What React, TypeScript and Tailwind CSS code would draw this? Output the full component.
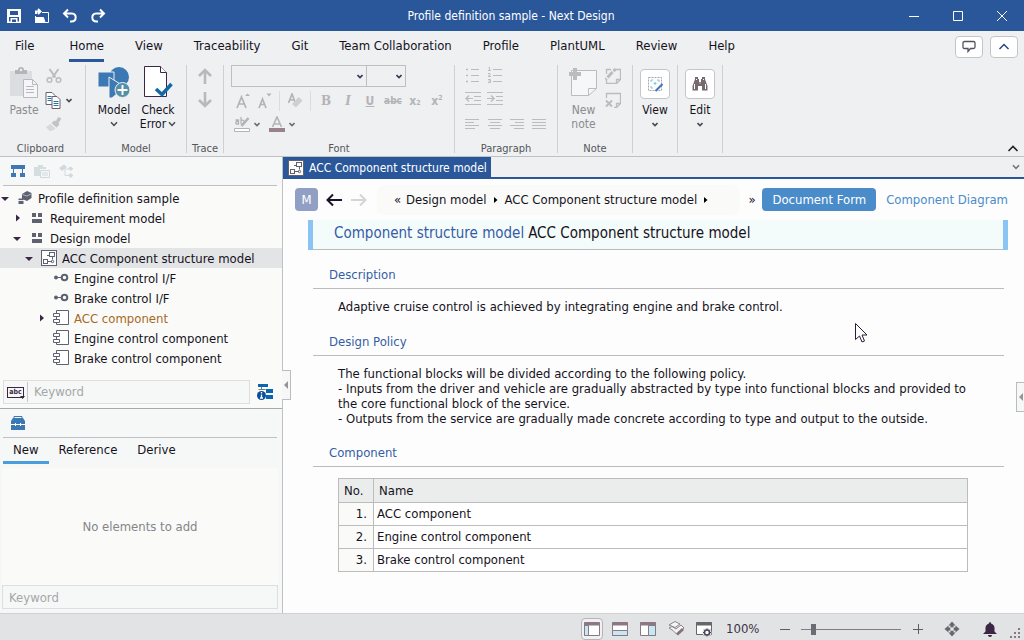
import React, { useState } from "react";
import clsx from "clsx";

// --- SHARED ---

type IconProps = { className?: string };

function ChevronDown({ className }: IconProps) {
  return (
    <svg viewBox="0 0 8 6" fill="none" stroke="currentColor" strokeWidth="1.5" className={clsx("h-[6px] w-[8px] shrink-0", className)}>
      <path d="M1 1.2 4 4.4 7 1.2" />
    </svg>
  );
}

function SmallChevron({ className }: IconProps) {
  return (
    <svg viewBox="0 0 6 5" fill="none" stroke="currentColor" strokeWidth="1.6" className={clsx("h-[5px] w-[6px] shrink-0", className)}>
      <path d="M.5 1 3 3.500 5.500 1" />
    </svg>
  );
}

// Nodes joined by a connector, in a frame
function StructureIcon({ className }: IconProps) {
  return (
    <svg viewBox="0 0 16 16" fill="none" stroke="#5d6170" className={clsx("h-4 w-4 shrink-0", className)}>
      <rect x="0.5" y="0.5" width="15" height="15" fill="#fdfdfd" />
      <rect x="8.5" y="2.5" width="5" height="4" />
      <rect x="2.5" y="9.5" width="4" height="4" />
      <path d="M6.5 11.5H11M11.5 6.5v3M6 5.5h2.5" />
      <circle cx="11.5" cy="11.5" r="1.2" />
    </svg>
  );
}

function ProjectIcon() {
  return (
    <svg viewBox="0 0 16 16" className="h-4 w-4 shrink-0" fill="#5d6170">
      <path d="M5 4 10 1l4.500 2v5L10 11 5 9z" />
      <path d="M5.500 4.500 9.800 6 14 4" stroke="#b9bbc4" strokeWidth="0.9" fill="none" />
      <path d="M1.500 8.500h5V14h-5z" />
      <path d="M1 10.500h6" stroke="#fafbf9" strokeWidth="0.9" />
    </svg>
  );
}

function ModelIcon() {
  return (
    <svg viewBox="0 0 16 16" className="h-4 w-4 shrink-0" fill="#5d6170">
      <path d="M3 3h4v4H3zM9 3h4v4H9zM3 9h10v4H3z" />
    </svg>
  );
}

function InterfaceIcon() {
  return (
    <svg viewBox="0 0 16 16" className="h-4 w-4 shrink-0" fill="#5d6170">
      <circle cx="3" cy="7.500" r="2" />
      <path d="M4 7h5v1H4z" />
      <circle cx="11.500" cy="7.500" r="2.800" fill="none" stroke="#5d6170" strokeWidth="2" />
    </svg>
  );
}

function ComponentIcon() {
  return (
    <svg viewBox="0 0 16 16" className="h-4 w-4 shrink-0" fill="#fff" stroke="#5d6170">
      <path d="M3.500.5h12v14h-12z" />
      <path d="M.5 3.500h6v3h-6zM.5 9.500h6v3h-6z" />
    </svg>
  );
}

// --- TITLE BAR ---

function TitleBar() {
  return (
    <header className="flex h-[31px] shrink-0 items-center bg-[#2a579a] text-white">
      <div className="flex items-center gap-3 pl-1.5">
        <button aria-label="Save" className="flex h-6 w-4 items-center justify-center">
          <svg viewBox="0 0 16 16" className="h-4 w-4" fill="#fff">
            <path d="M1 1h14v14H1zM4 3v4h8V3zM3 9v4.500h1.500V10h7v3.500H13V9zM6 11.500V14h4v-2.500z" fillRule="evenodd" />
          </svg>
        </button>
        <button aria-label="Open" className="flex h-6 w-4 items-center justify-center">
          <svg viewBox="0 0 16 16" className="h-4 w-4" fill="none" stroke="#fff">
            <path d="M8 4.500h6.500v10h-13V8" />
            <path d="M1.500 9.500h8l1.500 5h-9.500z" fill="#fff" />
            <path d="M2 6V3.500h4M4 1l2.500 2.500L4 6" strokeWidth="2" />
          </svg>
        </button>
        <button aria-label="Undo" className="flex h-6 w-4 items-center justify-center">
          <svg viewBox="0 0 16 16" className="h-4 w-4" fill="none" stroke="#fff" strokeWidth="2">
            <path d="M6 1.500 2 5.500l4 4M2.500 5.500H10c5 0 5 8-.5 8H8" />
          </svg>
        </button>
        <button aria-label="Redo" className="flex h-6 w-4 items-center justify-center">
          <svg viewBox="0 0 16 16" className="h-4 w-4" fill="none" stroke="#fff" strokeWidth="2">
            <path d="m10 1.500 4 4-4 4M13.500 5.500H6c-5 0-5 8 .5 8H8" />
          </svg>
        </button>
      </div>
      <h1 className="flex-1 pl-6 text-center text-xs font-normal">Profile definition sample - Next Design</h1>
      <div className="flex items-center">
        <button aria-label="Minimize" className="flex h-7 w-11 items-center justify-center">
          <svg viewBox="0 0 10 10" className="h-[10px] w-[10px]" stroke="#fff"><path d="M0 5.500h10" /></svg>
        </button>
        <button aria-label="Maximize" className="flex h-7 w-11 items-center justify-center">
          <svg viewBox="0 0 10 10" className="h-[10px] w-[10px]" stroke="#fff" fill="none"><path d="M.5.5h9v9h-9z" /></svg>
        </button>
        <button aria-label="Close" className="flex h-7 w-11 items-center justify-center">
          <svg viewBox="0 0 12 12" className="h-3 w-3" stroke="#fff"><path d="m1 1 10 10M11 1 1 11" /></svg>
        </button>
      </div>
    </header>
  );
}

const MENUS = ["File", "Home", "View", "Traceability", "Git", "Team Collaboration", "Profile", "PlantUML", "Review", "Help"];

function MenuBar() {
  const [active, setActive] = useState("Home");
  return (
    <nav className="flex h-[31px] shrink-0 items-center pr-1.5 pl-[15px] text-[13px]">
      <div className="flex gap-[31px]">
        {MENUS.map((menu) => (
          <button
            key={menu}
            onClick={() => setActive(menu)}
            className={clsx("h-[31px] border-b-3 pt-px first:mr-1", menu === active ? "border-[#2a579a]" : "border-transparent")}
          >
            {menu}
          </button>
        ))}
      </div>
      <div className="ml-auto flex gap-[7px]">
        <button aria-label="Feedback" className="flex h-[22px] w-7 items-center justify-center rounded-sm border border-[#c5c5c8] bg-white">
          <svg viewBox="0 0 14 14" className="h-[14px] w-[14px]" fill="none" stroke="#55525f" strokeWidth="1.300">
            <path d="M2.500 1.500h9q1.500 0 1.500 1.500v4q0 1.500-1.500 1.500H8.500L6 11.500v-3H2.500Q1 8.500 1 7V3q0-1.500 1.500-1.500z" />
          </svg>
        </button>
        <button aria-label="Collapse" className="flex h-[22px] w-7 items-center justify-center rounded-sm border border-[#c5c5c8] bg-white">
          <svg viewBox="0 0 12 8" className="h-2 w-3" fill="none" stroke="#2a4a80" strokeWidth="1.500"><path d="m1.500 6 4.500-4.500L10.500 6" /></svg>
        </button>
      </div>
    </nav>
  );
}

// --- RIBBON ---

function Group({ label, className, children }: { label?: string; className: string; children: React.ReactNode }) {
  return (
    <section className={clsx("flex h-[88px] shrink-0 flex-col justify-between border-r border-[#d0d0d3]", className)}>
      <div>{children}</div>
      <div className="text-center text-[11px] leading-[8px] text-[#55555a]">{label}</div>
    </section>
  );
}

function Tool({ label, className, children }: { label: string; className?: string; children: React.ReactNode }) {
  return (
    <button aria-label={label} className={clsx("flex h-[18px] items-center justify-center", className)}>
      {children}
    </button>
  );
}

function AlignIcon({ d }: { d: string }) {
  return (
    <svg viewBox="0 0 16 12" className="h-3 w-4" stroke="#bcbcbf" fill="none">
      <path d={d} />
    </svg>
  );
}

function ClipboardGroup() {
  return (
    <Group label="Clipboard" className="w-[86px] pr-1">
      <div className="flex gap-1 pl-2">
        <button className="flex w-8 flex-col items-center pt-[2px] text-[#8c8c90]">
          <svg viewBox="0 0 28 32" className="h-8 w-7" fill="none">
            <path d="M0 4h22v25H0z" fill="#dcdde0" />
            <path d="M5 3h3q0-3 3-3t3 3h3v4H5z" fill="#b5b5b9" />
            <circle cx="11" cy="3" r="1.200" fill="#eef0f2" />
            <path d="M13.500 12.500h9l5 5v13h-14z" fill="#f6f6f8" stroke="#b9b9bd" />
            <path d="M22.500 12.500v5h5M16 19.500h8M16 22.500h8M16 25.500h8" stroke="#b9b9bd" />
          </svg>
          <span className="pt-[2px] leading-[18px]">Paste</span>
        </button>
        <div className="flex flex-col items-start gap-1.5 pt-[2px]">
          <Tool label="Cut">
            <svg viewBox="0 0 16 16" className="h-4 w-5" fill="none" stroke="#bcbcbf" strokeWidth="2">
              <path d="m3.500 1 6 8.500M12.500 1l-6 8.500" />
              <circle cx="3.500" cy="12" r="2.300" strokeWidth="1.500" />
              <circle cx="12.500" cy="12" r="2.300" strokeWidth="1.500" />
            </svg>
          </Tool>
          <Tool label="Copy" className="gap-1 text-[#4c4957]">
            <svg viewBox="0 0 17 17" className="h-[17px] w-[18px]" fill="#fff" stroke="#6a5f70">
              <path d="M1.500.5h6l3 3v9h-9z" />
              <path d="M3 4.500h4M3 6.500h4M3 8.500h4" stroke="#2a72a8" />
              <path d="M7.500 4.500h5l3 3v9h-8z" />
              <path d="M9 9.500h5M9 11.500h5M9 13.500h5" stroke="#2a72a8" />
            </svg>
            <SmallChevron />
          </Tool>
          <Tool label="Format painter">
            <svg viewBox="0 0 16 16" className="h-4 w-5" fill="#c3c3c7">
              <path d="m12 1 3.500 1.500-3 4.500 1 1.500-3 3-5-4.500 3-2.500 1.500.5z" />
              <path d="m4.500 8 5 4.500Q7 15 3.500 15L0 11z" fill="#d9d9dc" />
            </svg>
          </Tool>
        </div>
      </div>
    </Group>
  );
}

function ModelGroup() {
  return (
    <Group label="Model" className="w-[101px]">
      <div className="flex justify-center gap-1">
        <button className="flex w-10 flex-col items-center">
          <svg viewBox="0 0 32 34" className="h-[34px] w-8">
            <circle cx="21" cy="12" r="10" fill="#3c78b4" />
            <path d="M0 7h16v15H0z" fill="#3c78b4" stroke="#eef0f2" />
            <path d="m11 12 16 10-13 11h-3z" fill="#3c78b4" stroke="#eef0f2" />
            <circle cx="24.500" cy="25" r="7.500" fill="#5590a6" stroke="#eef0f2" />
            <path d="M24.500 20v10M19.500 25h10" stroke="#fff" strokeWidth="2" />
          </svg>
          <span className="pt-[2px] leading-[18px]">Model</span>
          <ChevronDown className="mt-[2px] text-[#4c4957]" />
        </button>
        <button className="flex w-10 flex-col items-center">
          <svg viewBox="0 0 30 34" className="h-[34px] w-[30px]" fill="#fff" stroke="#3b2645">
            <path d="M1.500 1.500h16l6 6v24h-22z" />
            <path d="M17.500 1.500v6h6" />
            <path d="m13 24 6 5.500L28.500 19" fill="none" stroke="#1468a8" strokeWidth="3.500" />
          </svg>
          <span className="pt-[2px] leading-[18px]">Check</span>
          <span className="flex items-center gap-[2px] leading-[10px]">Error <ChevronDown className="text-[#4c4957]" /></span>
        </button>
      </div>
    </Group>
  );
}

function Combo({ label, className }: { label: string; className: string }) {
  return (
    <div className={clsx("relative", className)}>
      <select aria-label={label} className="block h-[22px] w-full appearance-none border border-[#bfbfc2] bg-transparent" />
      <SmallChevron className="pointer-events-none absolute top-[9px] right-1 text-[#3c3550]" />
    </div>
  );
}

function FontGroup() {
  return (
    <Group label="Font" className="w-[231px]">
      <div className="flex flex-col gap-1 pl-[7px] text-[#b4b4b7]">
        <div className="flex">
          <Combo label="Font family" className="w-[136px]" />
          <Combo label="Font size" className="-ml-px w-10" />
        </div>
        <div className="flex h-5 items-center font-bold">
          <Tool label="Grow font" className="w-6">
            <svg viewBox="0 0 16 16" className="h-4 w-4" fill="none" stroke="currentColor" strokeWidth="1.700"><path d="M2 15 6.500 4 11 15M3.500 11h6" /><path d="m10 3 2.500-2.500L15 3z" fill="currentColor" stroke="none" /></svg>
          </Tool>
          <Tool label="Shrink font" className="w-5">
            <svg viewBox="0 0 16 16" className="h-4 w-4" fill="none" stroke="currentColor" strokeWidth="1.700"><path d="M2 15 5.500 6 9 15M3.500 11.500h4" /><path d="m9.500.5 2.500 3 2.500-3z" fill="currentColor" stroke="none" /></svg>
          </Tool>
          <span className="mx-1 h-5 w-px bg-[#dcdcdf]" />
          <Tool label="Clear formatting" className="w-[22px]">
            <svg viewBox="0 0 16 16" className="h-4 w-4" fill="none" stroke="currentColor" strokeWidth="1.700"><path d="M1.500 10 5 1l3 8M3 7h4" /><path d="m11.500 4 4 3.500-6.500 7L5 11z" fill="#cfcfd2" stroke="none" /></svg>
          </Tool>
          <span className="mx-1 h-5 w-px bg-[#dcdcdf]" />
          <Tool label="Bold" className="w-[22px] font-['DejaVu_Serif',serif] text-xs">B</Tool>
          <Tool label="Italic" className="w-[22px] font-['DejaVu_Serif',serif] text-xs italic">I</Tool>
          <Tool label="Underline" className="w-[22px] text-xs underline">U</Tool>
          <Tool label="Strikethrough" className="w-6 text-[10px] line-through">abc</Tool>
          <Tool label="Subscript" className="w-[20px] text-xs">x<sub className="text-[7px]">2</sub></Tool>
          <Tool label="Superscript" className="w-6 text-xs">x<sup className="text-[7px]">2</sup></Tool>
        </div>
        <div className="flex h-[18px] items-center">
          <Tool label="Highlight" className="ml-[2px] w-7 gap-1">
            <svg viewBox="0 0 16 16" className="h-4 w-4 shrink-0" fill="none" stroke="currentColor">
              <path d="M1.500 4h3v4h-2q-1.500-1.500 0-2.500h2M7 1v7M7 4.500q3-1 3 1.500T7 8" strokeWidth="1.300" />
              <path d="m14.500 2-7 8" strokeWidth="2.500" />
              <path d="M.5 12.500h15v3H.5z" fill="#fff" />
            </svg>
            <SmallChevron className="text-[#75697c]" />
          </Tool>
          <Tool label="Font color" className="ml-[7px] w-7 gap-1">
            <svg viewBox="0 0 16 16" className="h-4 w-4 shrink-0" fill="none" stroke="currentColor" strokeWidth="1.600">
              <path d="M3.500 11 8 1l4.500 10M5 8h6" />
              <path d="M0 12h16v4H0z" fill="#98828e" stroke="none" />
            </svg>
            <SmallChevron className="text-[#75697c]" />
          </Tool>
        </div>
      </div>
    </Group>
  );
}

function ParagraphGroup() {
  return (
    <Group label="Paragraph" className="w-[103px]">
      <div className="flex flex-col gap-[7px] pl-[10px]">
        <div className="flex gap-1.5">
          <Tool label="Bullets">
            <svg viewBox="0 0 16 18" className="h-[18px] w-4" stroke="#bcbcbf" fill="#bcbcbf"><path d="M6 4.500h8M6 10.500h8M6 16.500h8" /><path d="M1.500 4h1v1h-1zM1.500 10h1v1h-1zM1.500 16h1v1h-1z" /></svg>
          </Tool>
          <Tool label="Numbering">
            <svg viewBox="0 0 16 18" className="h-[18px] w-4" stroke="#bcbcbf" fill="none"><path d="M6 4.500h9M6 10.500h9M6 16.500h9" /><path d="M1.500 2.500h1v3M1 5.500h3M1 8.500h2v1.500L1 11.500h3M1 14.500h2.500v3H1M1.500 16h2" /></svg>
          </Tool>
        </div>
        <div className="flex gap-1.5">
          <Tool label="Decrease indent">
            <svg viewBox="0 0 16 14" className="h-[14px] w-4" stroke="#bcbcbf" fill="none"><path d="M0 .5h16M9 4.500h7M9 8.500h7M0 12.500h16M1 6.500h7" /><path d="m4 3.500-3 3 3 3" strokeWidth="1.500" /></svg>
          </Tool>
          <Tool label="Increase indent">
            <svg viewBox="0 0 16 14" className="h-[14px] w-4" stroke="#bcbcbf" fill="none"><path d="M0 .5h16M9 4.500h7M9 8.500h7M0 12.500h16M0 6.500h7" /><path d="m4 3.500 3 3-3 3" strokeWidth="1.500" /></svg>
          </Tool>
        </div>
        <div className="flex gap-1.5">
          <Tool label="Align left"><AlignIcon d="M0 1.500h14M0 4.500h9M0 7.500h14M0 10.500h10" /></Tool>
          <Tool label="Align center"><AlignIcon d="M1 1.500h14M3 4.500h10M1 7.500h14M3 10.500h10" /></Tool>
          <Tool label="Align right"><AlignIcon d="M1 1.500h14M6 4.500h9M1 7.500h14M5 10.500h10" /></Tool>
          <Tool label="Justify"><AlignIcon d="M1 1.500h14M1 4.500h14M1 7.500h14M1 10.500h14" /></Tool>
        </div>
      </div>
    </Group>
  );
}

function NoteGroup() {
  return (
    <Group label="Note" className="w-[75px]">
      <div className="flex gap-2 pl-[11px]">
        <button className="flex w-7 flex-col items-start text-[#8c8c90]">
          <svg viewBox="0 0 28 34" className="h-[34px] w-7" fill="none" stroke="#bcbcbf">
            <path d="M2.500 5.500h25v18l-8 7h-17z" fill="#f6f7f8" />
            <path d="M19.500 30.500v-7h8" />
            <path d="M0 9h12M6 3v12" stroke="#bcbcbf" strokeWidth="4" />
          </svg>
          <span className="pt-1 pl-px text-center leading-[14px]">New note</span>
        </button>
        <div className="flex flex-col gap-1.5 pt-[2px]">
          <Tool label="Edit note">
            <svg viewBox="0 0 16 16" className="h-4 w-4" fill="none" stroke="#bcbcbf"><path d="M10 1.500h5.500v10l-4 4H1.500V11M11.500 15.500v-4h4M1.500 6V1.500H6" strokeWidth="1.300" /><path d="m10.500 1-2 2.200M7.500 4 2.500 9.500M1.500 10.500l-1 1" strokeWidth="3" /></svg>
          </Tool>
          <Tool label="Delete note">
            <svg viewBox="0 0 16 16" className="h-4 w-4" fill="none" stroke="#bcbcbf"><path d="M1.500 6V1.500h14v10l-4 4H9M11.500 15.500v-4h4" strokeWidth="1.300" /><path d="m1 8.500 6 6M7 8.500l-6 6" strokeWidth="2" /></svg>
          </Tool>
        </div>
      </div>
    </Group>
  );
}

function BoxedTool({ label, children }: { label: string; children: React.ReactNode }) {
  return (
    <button className="mx-auto flex w-[30px] flex-col items-center pt-1">
      <span className="flex h-[30px] w-[30px] items-center justify-center rounded-sm border border-[#c5c5c8] bg-white">{children}</span>
      <span className="pt-[2px] leading-[18px]">{label}</span>
      <SmallChevron className="mt-[3px] text-[#4c4957]" />
    </button>
  );
}

function Ribbon() {
  return (
    <div className="flex shrink-0 items-start border-b border-[#bfc1c4] pt-[3px] pb-[3px]">
      <ClipboardGroup />
      <ModelGroup />
      <Group label="Trace" className="w-[37px]">
        <div className="flex flex-col items-center gap-2 pt-[3px]">
          {["Up", "Down"].map((dir) => (
            <button key={dir} aria-label={dir}>
              <svg viewBox="0 0 14 16" className={clsx("h-4 w-[14px]", dir === "Down" && "rotate-180")} fill="none" stroke="#b9b9bc" strokeWidth="2.600">
                <path d="M7 16V2M1 8l6-6 6 6" />
              </svg>
            </button>
          ))}
        </div>
      </Group>
      <FontGroup />
      <ParagraphGroup />
      <NoteGroup />
      <Group className="w-[45px]">
        <BoxedTool label="View">
          <svg viewBox="0 0 16 16" className="h-4 w-4" fill="none" stroke="#a9a3aa">
            <path d="M1.500 1.500h13v13h-13z" strokeDasharray="2 1" />
            <path d="M4 6V4h2M10 4h2v2M4 10v2h2M6.500 7.500h3M8 6v3" stroke="#7cc4dc" />
            <path d="m15.500 8-7 7" stroke="#3c78c0" strokeWidth="2" />
          </svg>
        </BoxedTool>
      </Group>
      <Group className="w-[45px]">
        <BoxedTool label="Edit">
          <svg viewBox="0 0 16 14" className="h-[14px] w-4" fill="#75686e">
            <path d="M3 0h3v2h1v3h2V2h1V0h3v2l1 3 1.500 4v4.500H10V9H6v4.500H.5V9L2 5l1-3z" />
            <path d="M2.500 7v5M13.500 7v5M7.500 6h1M4.500 2v1M11.500 2v1" stroke="#fff" />
          </svg>
        </BoxedTool>
      </Group>
      <button aria-label="Collapse ribbon" className="mr-[5px] ml-auto self-end">
        <svg viewBox="0 0 12 8" className="h-2 w-3" fill="none" stroke="#222" strokeWidth="1.600"><path d="m1.500 6 4.500-4.500L10.500 6" /></svg>
      </button>
    </div>
  );
}

// --- SIDEBAR ---

type TreeRow = { name: string; pad: string; open?: boolean; leaf?: boolean; icon: React.ReactNode; tone?: string };

const TREE: TreeRow[] = [
  { name: "Profile definition sample", pad: "pl-0", open: true, icon: <ProjectIcon /> },
  { name: "Requirement model", pad: "pl-3", icon: <ModelIcon /> },
  { name: "Design model", pad: "pl-3", open: true, icon: <ModelIcon /> },
  { name: "ACC Component structure model", pad: "pl-6", open: true, icon: <StructureIcon /> },
  { name: "Engine control I/F", pad: "pl-9", leaf: true, icon: <InterfaceIcon /> },
  { name: "Brake control I/F", pad: "pl-9", leaf: true, icon: <InterfaceIcon /> },
  { name: "ACC component", pad: "pl-9", icon: <ComponentIcon />, tone: "text-[#a8691f]" },
  { name: "Engine control component", pad: "pl-9", leaf: true, icon: <ComponentIcon /> },
  { name: "Brake control component", pad: "pl-9", leaf: true, icon: <ComponentIcon /> },
];

function ModelTree() {
  const [selected, setSelected] = useState("ACC Component structure model");
  return (
    <ul className="flex-1 bg-[#fafbf9] pt-[2px]">
      {TREE.map((row) => (
        <li key={row.name}>
          <button
            onClick={() => setSelected(row.name)}
            className={clsx("flex h-5 w-full items-center text-[13px]", row.pad, row.tone, row.name === selected && "bg-[#e3e4e6]")}
          >
            <span className="flex w-[17px] justify-start pl-px">
              {!row.leaf && (
                <svg viewBox="0 0 8 8" className="h-2 w-2" fill="#3b2645">
                  {row.open ? <path d="M0 3h8L4 7z" /> : <path d="M3 .5 7 4 3 7.500z" />}
                </svg>
              )}
            </span>
            {row.icon}
            <span className="pt-px pl-[5px]">{row.name}</span>
          </button>
        </li>
      ))}
    </ul>
  );
}

function Sidebar() {
  const [tab, setTab] = useState("New");
  return (
    <aside className="flex w-[283px] shrink-0 flex-col border-r border-[#bfc1c4] bg-[#f6f8f8] text-[13px]">
      <div className="mr-[5px] ml-[3px] flex h-[29px] items-center gap-2 border-b border-[#bfc1c4] pl-[7px]">
        <button aria-label="Model view">
          <svg viewBox="0 0 16 14" className="h-[14px] w-4" fill="#3c78b4"><path d="M1 1h14v4H1zM1 9h5v4H1zM10 9h5v4h-5z" /><path d="M3.500 5v4M12.500 5v4" stroke="#3c78b4" /></svg>
        </button>
        <button aria-label="Product line view">
          <svg viewBox="0 0 16 14" className="h-[14px] w-4" fill="#d6dde0"><path d="M0 3h4V1h5v2h3v2H6v7H0z" /><path d="M6.500 6.500h9v7h-9z" fill="#f6f8f8" stroke="#cfd8dc" /><path d="M8 9h6M8 11h6" stroke="#cfd8dc" /></svg>
        </button>
        <button aria-label="Trace view">
          <svg viewBox="0 0 16 14" className="h-[14px] w-4" fill="#d2dade"><path d="M1 4 6 .5 9 3 4 7zM10 4l3-1.500L15.500 5l-3 2zM10 11l3-2 2.500 2.500-3 2.500z" /><path d="M7 4.500v7h4M7 5h4" stroke="#d2dade" fill="none" /></svg>
        </button>
      </div>
      <ModelTree />
      <div className="flex items-center gap-[7px] bg-[#fafbf9] pt-1 pb-1 pl-[3px]">
        <div className="flex h-6 w-[247px] items-center border border-[#dcdfde] bg-[#f6f8f8]">
          <button aria-label="Search mode" className="relative flex h-5 w-6 items-center justify-center border-r border-[#c5c5c8] text-[#3b2645]">
            <span className="border border-[#3b2645] px-px pb-px text-[7px] leading-[8px] font-bold">abc</span>
            <svg viewBox="0 0 5 3" className="absolute right-[2px] bottom-[3px] h-[3px] w-[5px]" fill="currentColor"><path d="M0 0h5L2.500 3z" /></svg>
          </button>
          <input aria-label="Filter tree" placeholder="Keyword" className="min-w-0 flex-1 bg-transparent px-1.5 text-[13px] outline-none placeholder:text-[#a4a7a6]" />
        </div>
        <button aria-label="Tree settings">
          <svg viewBox="0 0 16 16" className="h-4 w-4" fill="#0b66b2">
            <path d="M1 0h10v3H1zM9 5h7v4H9zM9 11h7v4H9z" />
            <path d="M4.500 3v3M1.500 5.500h7" stroke="#777" />
            <circle cx="4.500" cy="11.500" r="4.500" fill="#0b4f9c" />
            <path d="M4.500 8v1.500M4.500 10.500V14M3 14h3" stroke="#fff" strokeWidth="1.300" />
          </svg>
        </button>
      </div>
      <div className="border-t border-[#a6a8aa] px-[3px]">
        <div className="mr-0.5 flex h-[29px] items-center border-b border-[#bfc1c4] pl-[7px]">
          <button aria-label="Toolbox">
            <svg viewBox="0 0 16 14" className="h-[14px] w-4" fill="#3c78b4">
              <path d="M4 2.500V.5h8v2" fill="none" stroke="#3c78b4" /><path d="M3 2h10l2 3v9H1V5z" /><path d="M1 8.500h14M5.500 7v3M10.500 7v3" stroke="#fff" />
            </svg>
          </button>
        </div>
        <div role="tablist" className="flex">
          {["New", "Reference", "Derive"].map((name) => (
            <button
              key={name}
              role="tab"
              aria-selected={name === tab}
              onClick={() => setTab(name)}
              className={clsx("h-[26px] border-b-3 px-[10px]", name === tab ? "border-[#4a9edb]" : "border-transparent")}
            >
              {name}
            </button>
          ))}
        </div>
      </div>
      <div className="mx-0.5 mt-1 mr-1 flex h-[117px] items-center justify-center bg-[#fafbf9] text-[#858589]">No elements to add</div>
      <input aria-label="Filter elements" placeholder="Keyword" className="mr-1 mb-1 ml-0.5 h-6 border border-[#dcdfde] bg-[#f6f8f8] px-1.5 outline-none placeholder:text-[#a4a7a6]" />
    </aside>
  );
}

// --- DOCUMENT ---

function Section({ title, children }: { title: string; children: React.ReactNode }) {
  return (
    <section>
      <h3 className="border-b border-[#bcbcbf] pt-4 pb-[5px] pl-4 leading-[17px] text-[#345da5]">{title}</h3>
      <div className="pt-[10px] pr-9 pb-[2px] pl-[25px]">{children}</div>
    </section>
  );
}

const POLICY = [
  "The functional blocks will be divided according to the following policy.",
  "- Inputs from the driver and vehicle are gradually abstracted by type into functional blocks and provided to the core functional block of the service.",
  "- Outputs from the service are gradually made concrete according to type and output to the outside.",
];

const COMPONENTS = ["ACC component", "Engine control component", "Brake control component"];

function DocumentToolbar() {
  return (
    <div className="flex h-[41px] shrink-0 items-center pr-4 pl-3">
      <button className="h-[23px] w-[23px] rounded-sm bg-[#909fc3] text-white">M</button>
      <button aria-label="Back" className="ml-2">
        <svg viewBox="0 0 16 14" className="h-[14px] w-4" fill="none" stroke="#1a1226" strokeWidth="2"><path d="M16 7H2M7 1.500 1.500 7 7 12.500" /></svg>
      </button>
      <button aria-label="Forward" className="ml-[9px]">
        <svg viewBox="0 0 16 14" className="h-[14px] w-4" fill="none" stroke="#d5d5d7" strokeWidth="2"><path d="M0 7h14M9 1.500 14.500 7 9 12.500" /></svg>
      </button>
      <nav aria-label="Breadcrumb" className="ml-[10px] flex h-[30px] min-w-0 flex-1 items-center rounded-md bg-[#fafbf9] pl-[17px] whitespace-nowrap">
        <span className="w-3">«</span>
        <a href="#design-model">Design model</a>
        <Arrow />
        <a href="#structure-model">ACC Component structure model</a>
        <Arrow />
      </nav>
      <span className="w-[22px] pl-px text-center">»</span>
      <button className="h-[23px] rounded-sm bg-[#4a8bca] px-[10px] text-white">Document Form</button>
      <button className="ml-[10px] text-[#4a8bca]">Component Diagram</button>
    </div>
  );
}

function Arrow() {
  return (
    <svg viewBox="0 0 4 6" className="mx-[7px] h-[6px] w-1 shrink-0" fill="#000">
      <path d="M0 0v6l3.500-3z" />
    </svg>
  );
}

function DocumentPane() {
  return (
    <main className="relative flex min-w-0 flex-1 flex-col bg-[#fdfdfd] text-[13px]">
      <div className="flex h-[22px] shrink-0 items-center border-b-2 border-[#2a579a] bg-[#eef0f2]">
        <button className="flex h-full items-center gap-[5px] bg-[#2a579a] pt-[2px] pr-1 pl-[5px] text-xs text-white">
          <StructureIcon />
          ACC Component structure model
        </button>
        <button aria-label="Tab list" className="mr-1 ml-auto text-[#75697c]"><ChevronDown /></button>
      </div>
      <DocumentToolbar />
      <article className="pr-4 pl-[25px]">
        <h2 className="flex h-[30px] items-center border-x-5 border-[#8ac4f5] text-[15px] font-normal">
          <span className="flex h-full flex-1 items-center border-b border-[#bcbcbf] bg-[#f4fbfb] pb-px pl-[21px]">
            <span className="pr-1 text-[#345da5]">Component structure model</span>
            ACC Component structure model
          </span>
        </h2>
        <div className="mr-1 ml-[5px]">
          <Section title="Description">
            <p className="pb-px leading-[15px]">Adaptive cruise control is achieved by integrating engine and brake control.</p>
          </Section>
          <Section title="Design Policy">
            {POLICY.map((line) => <p key={line} className="leading-[15px]">{line}</p>)}
          </Section>
          <Section title="Component">
            <table className="mt-px w-full border-collapse">
              <thead>
                <tr className="h-6 bg-[#ebeded] text-left">
                  <th className="w-[35px] border border-[#bcbcbf] pl-[5px] font-normal">No.</th>
                  <th className="border border-[#bcbcbf] pl-[5px] font-normal">Name</th>
                </tr>
              </thead>
              <tbody>
                {COMPONENTS.map((name, i) => (
                  <tr key={name} className="h-[23px]">
                    <td className="border border-[#bcbcbf] bg-[#fafbf9] pr-[6px] text-right">{i + 1}.</td>
                    <td className="border border-[#bcbcbf] bg-white pl-[3px]">{name}</td>
                  </tr>
                ))}
              </tbody>
            </table>
          </Section>
        </div>
      </article>
      {/* Splitter handles over the pane edges */}
      <button aria-label="Collapse sidebar" className="absolute top-[213px] -left-px flex h-[30px] w-[9px] items-center justify-center border border-l-0 border-[#bcbcbf] bg-[#f6f8f8]">
        <svg viewBox="0 0 4 8" className="h-2 w-1" fill="#98929c"><path d="M4 0v8L0 4z" /></svg>
      </button>
      <button aria-label="Expand inspector" className="absolute top-[225px] right-0 flex h-[30px] w-2 items-center justify-center border border-r-0 border-[#bcbcbf] bg-[#f6f8f8]">
        <svg viewBox="0 0 4 8" className="h-2 w-1" fill="#98929c"><path d="M4 0v8L0 4z" /></svg>
      </button>
      <svg viewBox="0 0 13 20" className="absolute top-[166px] left-[572px] h-5 w-[13px]" fill="#fff" stroke="#2a1b38">
        <path d="M.5.5v16l4-3.500 2.500 6 2.500-1-2.500-6h5z" />
      </svg>
    </main>
  );
}

// --- STATUS BAR ---

function LayoutIcon({ d }: { d: string }) {
  return (
    <svg viewBox="0 0 16 14" className="h-[14px] w-4" fill="#fff" stroke="#8b7883">
      <path d="M.5.5h15v13H.5z" />
      <path d={d} fill="#c5e8f5" />
      <path d="M0 2h16" strokeWidth="3" />
    </svg>
  );
}

function StatusBar() {
  const [zoom, setZoom] = useState(10);
  return (
    <footer className="flex h-[27px] shrink-0 items-center justify-end border-t border-[#d0d1d4] bg-[#e2e3e5] pt-1 pr-[3px]">
      <button aria-label="Left pane" className="mr-[3px] flex h-[22px] w-[22px] items-center justify-center rounded-sm border border-[#b5b5b9] bg-[#f1f1f3]"><LayoutIcon d="M.5 3.500h4v10h-4z" /></button>
      <button aria-label="Bottom pane" className="flex w-7 justify-center"><LayoutIcon d="M.5 8.500h15v5H.5z" /></button>
      <button aria-label="Right pane" className="flex w-7 justify-center"><LayoutIcon d="M8.500 3.500h7v10h-7z" /></button>
      <button aria-label="Layers" className="flex w-7 justify-center">
        <svg viewBox="0 0 17 16" className="h-4 w-[17px]" fill="#f4f4f5" stroke="#8b8589">
          <path d="m1 4 6-3.500L12 3l-5 3.500zM1 7l3-1.500L8 8l5-4 3 3-7 6.500-4-4z" />
          <path d="m15 8-6 5.500" stroke="#85727c" strokeWidth="3" />
        </svg>
      </button>
      <button aria-label="View settings" className="flex w-7 justify-center">
        <svg viewBox="0 0 16 15" className="h-[15px] w-4" fill="#fff" stroke="#66666c">
          <path d="M.5.5h15v12H.5z" /><path d="M0 2h16" strokeWidth="3" />
          <circle cx="11" cy="10.500" r="4.500" fill="#e2e3e5" stroke="none" />
          <circle cx="11" cy="10.500" r="2.500" strokeWidth="1.500" stroke="#4a4658" />
          <path d="M11 6.500V8M11 13v1.500M7 10.500h1.500M13.500 10.500H15M8.200 7.700l1 1M13 12.500l1 1M14 7.700l-1 1M9 12.500l-1 1" stroke="#4a4658" />
        </svg>
      </button>
      <span className="w-[51px] pl-2 text-[13px] text-[#3b3448]">100%</span>
      <button aria-label="Zoom out" className="flex w-8 justify-center"><svg viewBox="0 0 10 10" className="h-[10px] w-[10px]" stroke="#5d5d64"><path d="M0 5.500h10" /></svg></button>
      <input
        type="range"
        aria-label="Zoom"
        value={zoom}
        onChange={(e) => setZoom(Number(e.target.value))}
        className="h-3 w-[100px] appearance-none bg-[linear-gradient(#8b7883,#8b7883)] bg-[length:100%_1px] bg-center bg-no-repeat [&::-webkit-slider-thumb]:h-[11px] [&::-webkit-slider-thumb]:w-[5px] [&::-webkit-slider-thumb]:appearance-none [&::-webkit-slider-thumb]:bg-[#6b6b74]"
      />
      <button aria-label="Zoom in" className="flex w-[34px] justify-center"><svg viewBox="0 0 10 10" className="h-[10px] w-[10px]" stroke="#5d5d64"><path d="M0 5.500h10M5.500 0v10" /></svg></button>
      <button aria-label="Fit" className="flex w-[34px] justify-center">
        <svg viewBox="0 0 16 16" className="h-4 w-4" fill="#66666c"><path d="m8 .5 3.500 4h-2v2h-3v-2h-2zM8 15.500l3.500-4h-2v-2h-3v2h-2zM.5 8l4-3.500v2h2v3h-2v2zM15.500 8l-4-3.500v2h-2v3h2v2z" /><path d="M6.500 6.500h3v3h-3z" fill="#e2e3e5" /></svg>
      </button>
      <button aria-label="Notifications" className="flex w-[41px] justify-center">
        <svg viewBox="0 0 14 15" className="h-[15px] w-[14px]" fill="#3b2645"><path d="M7 0q1 0 1 1.500Q11.500 2.500 11.500 6v3.500L14 12H0l2.500-2.500V6Q2.500 2.500 6 1.500 6 0 7 0zM5 13h4q0 2-2 2t-2-2z" /></svg>
      </button>
      <svg viewBox="0 0 11 11" className="mt-2 h-[11px] w-[11px]" fill="#8b7883"><path d="M8 0h2v2H8zM4 4h2v2H4zM8 4h2v2H8zM0 8h2v2H0zM4 8h2v2H4zM8 8h2v2H8z" /></svg>
    </footer>
  );
}

export default function App() {
  return (
    <div className="flex min-h-screen flex-col bg-[#eef0f2] font-['DejaVu_Sans_Condensed','DejaVu_Sans',sans-serif] text-xs text-[#16121c]">
      <TitleBar />
      <MenuBar />
      <Ribbon />
      <div className="flex flex-1">
        <Sidebar />
        <DocumentPane />
      </div>
      <StatusBar />
    </div>
  );
}
